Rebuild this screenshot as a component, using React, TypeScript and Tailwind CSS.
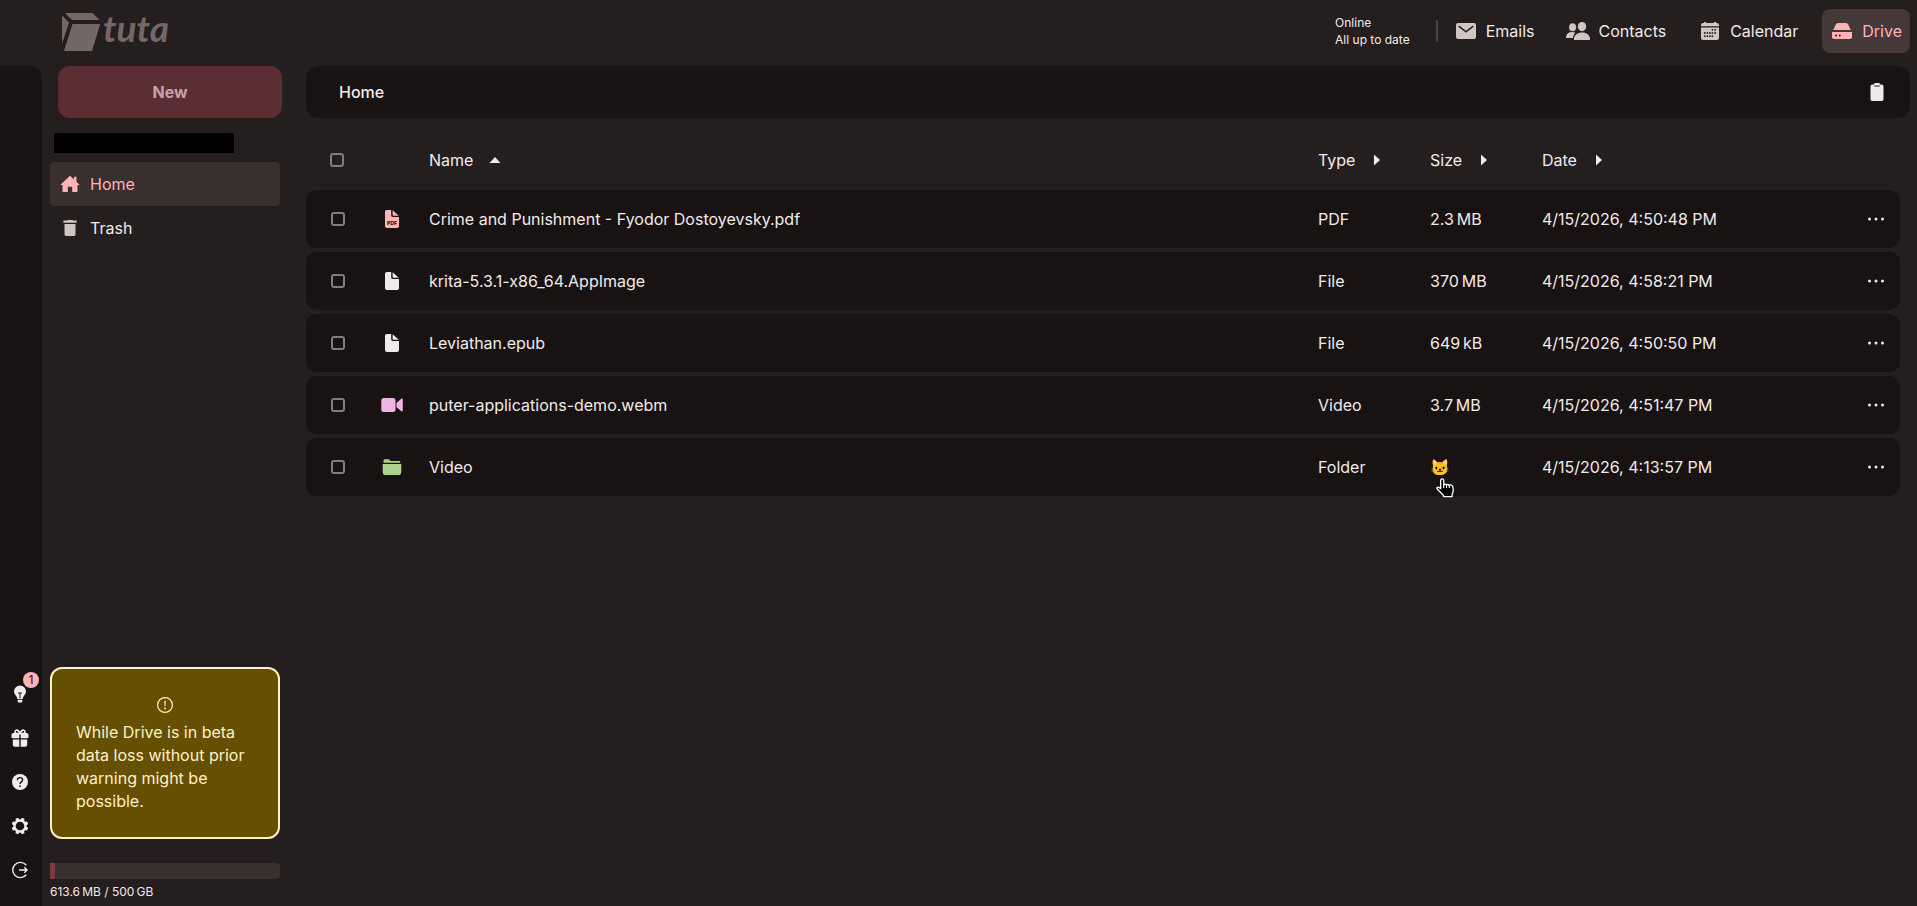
import type { ReactNode } from 'react';

type IconProps = { className?: string };

function Svg({ children, className = 'size-6' }: { children: ReactNode; className?: string }) {
  return (
    <svg viewBox="0 0 24 24" fill="currentColor" className={`shrink-0 ${className}`} aria-hidden="true">
      {children}
    </svg>
  );
}

const MailIcon = () => (
  <Svg>
    <rect x="2" y="4" width="20" height="16" rx="2" />
    <path d="M4.8 7.2 12 12.8l7.2-5.6" fill="none" stroke="#251e1e" strokeWidth="1.5" />
  </Svg>
);

const ContactsIcon = () => (
  <Svg>
    <ellipse cx="6.6" cy="8.3" rx="3.5" ry="4" />
    <ellipse cx="16" cy="7.6" rx="4.2" ry="4.6" />
    <path d="M0 19c0-4 2.600-6 6-6 1.300 0 2.500.2 3.400.8C7.900 15.200 7.200 17 7 19Z" />
    <path d="M8 21v-1.200c0-3.800 3.500-6.300 8-6.300s8 2.500 8 6.300V21Z" />
  </Svg>
);

const calendarDots: [number, number][] = [
  [14.4, 10.8], [17.2, 10.8],
  [6.8, 14], [9.4, 14], [12, 14], [14.4, 14], [17.2, 14],
  [6.8, 17.2], [9.4, 17.2], [12, 17.2], [14.4, 17.2],
];

const CalendarIcon = () => (
  <Svg>
    <path d="M3 7.300V6c0-1.100.9-2 2-2h1V3h2v1h8V3h2v1h1c1.100 0 2 .9 2 2v1.300Z" />
    <path d="M3 8.500h18V19c0 1.100-.9 2-2 2H5c-1.100 0-2-.9-2-2Z" />
    <g fill="#251e1e">
      {calendarDots.map(([x, y]) => (
        <circle key={`${x}-${y}`} cx={x} cy={y} r="0.9" />
      ))}
    </g>
  </Svg>
);

const DriveIcon = () => (
  <Svg>
    <path d="M3.300 11 5.400 6.200C6 4.800 6.900 4 8.400 4h7.200c1.500 0 2.400.8 3 2.200L20.700 11Z" />
    <path d="M2 13h20v5c0 1.300-.7 2-2 2H4c-1.300 0-2-.7-2-2Z" />
    <circle cx="6" cy="16.400" r="1" fill="#251e1e" />
    <circle cx="9.800" cy="16.400" r="1" fill="#251e1e" />
  </Svg>
);

const HomeIcon = () => (
  <Svg>
    <path d="m12 3.700 4 3.700V4.800h2.500v4.900l2.600 2.500c.4.400.2.900-.3.900h-1.300V19c0 .7-.4 1-1 1h-4.300v-5.300H9.800V20H5.500c-.6 0-1-.3-1-1v-5.900H3.200c-.5 0-.7-.5-.3-.9Z" />
  </Svg>
);

const TrashIcon = () => (
  <Svg>
    <path d="M9.300 4.600V4h5.400v.6h3.900v2.100H5.400V4.600Z" />
    <path d="M6.500 8h11v10.300c0 1.100-.6 1.700-1.700 1.700H8.200c-1.100 0-1.700-.6-1.700-1.700Z" />
  </Svg>
);

const ClipboardIcon = () => (
  <Svg>
    <path d="M7.500 4.500h1.300C9.200 3.400 10 3 11 3h2c1 0 1.800.4 2.200 1.500h1.300c1.300 0 2 .7 2 2V19c0 1.300-.7 2-2 2h-9c-1.300 0-2-.7-2-2V6.500c0-1.300.7-2 2-2Z" />
    <rect x="9" y="5" width="6" height="2" rx="1" fill="#8b8484" />
  </Svg>
);

const BulbIcon = () => (
  <Svg>
    <path d="M12 3.500a6 6 0 0 0-6 5.800c0 2.500 1.600 3.800 2.600 5.500.5.900.5 1.500.8 2.200h5.200c.3-.7.3-1.300.8-2.200 1-1.700 2.600-3 2.600-5.500a6 6 0 0 0-6-5.800Z" />
    <path d="M10 11h4M12 11v5.500" fill="none" stroke="#181212" strokeWidth="1" />
    <path d="M9.700 17.800h4.600v1.600c0 .7-.4 1.100-1 1.100h-2.600c-.6 0-1-.4-1-1.100Z" />
  </Svg>
);

const GiftIcon = () => (
  <Svg>
    <path
      d="M12 7.600C10.800 4.500 9.300 3.900 8.200 4.200 6.300 4.700 6.800 7.500 8.500 7.600Zm0 0c1.200-3.100 2.700-3.700 3.800-3.400 1.900.5 1.400 3.300-.3 3.400Z"
      fill="none"
      stroke="currentColor"
      strokeWidth="1.700"
    />
    <path d="M5.500 7h5.800v5.200H4.600c-.7 0-1.100-.4-1.100-1.100V9c0-1.300.7-2 2-2Zm7.200 0h5.800c1.300 0 2 .7 2 2v2.100c0 .7-.4 1.100-1.100 1.100h-6.700Z" />
    <path d="M4.800 13.500h6.500v7.300H6.900c-1.300 0-2.100-.7-2.100-2Zm7.900 0h6.500v5.300c0 1.300-.8 2-2.100 2h-4.400Z" />
  </Svg>
);

const HelpIcon = () => (
  <Svg>
    <circle cx="12" cy="12" r="8" />
    <path d="M9.400 10.200c0-1.600 1-2.600 2.600-2.600s2.600 1 2.600 2.300c0 2-2.500 2-2.500 4" fill="none" stroke="#181212" strokeWidth="1.400" />
    <circle cx="12.100" cy="16.100" r="0.900" fill="#181212" />
  </Svg>
);

const GearIcon = () => (
  <Svg>
    <circle cx="12" cy="12" r="5.500" fill="none" stroke="currentColor" strokeWidth="2.400" />
    {[22.5, 67.5, 112.5, 157.5, 202.5, 247.5, 292.5, 337.5].map((a) => (
      <path key={a} d="M10 6.500 10.600 3.700h2.800l.6 2.800Z" transform={`rotate(${a} 12 12)`} />
    ))}
  </Svg>
);

const LogoutIcon = () => (
  <Svg>
    <path
      d="M18.300 7.300A7.600 7.600 0 1 0 18.300 16.700M11 12h8M16.300 9.300 19 12l-2.700 2.700"
      fill="none"
      stroke="currentColor"
      strokeWidth="1.400"
    />
  </Svg>
);

const WarningIcon = () => (
  <Svg>
    <circle cx="12" cy="12" r="7.400" fill="none" stroke="currentColor" strokeWidth="1.200" />
    <path d="M11.300 7.800h1.400l-.2 5.400h-1Z" />
    <circle cx="12" cy="15.400" r="0.900" />
  </Svg>
);

const FileShape = () => (
  <>
    <path d="M7 3h4.200v5.300c0 1.100.6 1.700 1.700 1.700H19v9c0 1.300-.7 2-2 2H7c-1.300 0-2-.7-2-2V5c0-1.300.7-2 2-2Z" />
    <path d="M12.600 3.200 18.800 8.800h-5.400c-.5 0-.8-.3-.8-.8Z" />
  </>
);

const FileIcon = () => (
  <Svg className="size-6 text-[#f1eaea]">
    <FileShape />
  </Svg>
);

const PdfIcon = () => (
  <Svg className="size-6 text-[#ffb3b5]">
    <FileShape />
    <text x="12" y="17.700" fontSize="5.200" fontWeight="800" textAnchor="middle" fill="#181212" fontFamily="Inter, sans-serif">
      PDF
    </text>
  </Svg>
);

const VideoIcon = () => (
  <Svg className="size-6 text-[#f0b3e6]">
    <rect x="1.300" y="5" width="14.200" height="14" rx="2.500" />
    <path d="M16.400 10 21 6c.8-.7 1.800-.4 1.800.6v10.800c0 1-1 1.300-1.800.6l-4.600-4Z" />
  </Svg>
);

const FolderIcon = () => (
  <Svg className="size-6 text-[#b0d18b]">
    <path d="M3.500 7.800V6c0-1.100.6-1.700 1.700-1.700h3.600L10.500 6h8.300c1 0 1.600.6 1.700 1.800Z" />
    <path d="M2.700 9h18.600v8c-.2 2-.9 3-2.300 3H5c-1.400 0-2.100-1-2.300-3Z" />
  </Svg>
);

function Logo({ className = '' }: IconProps) {
  return (
    <svg viewBox="0 -8 116 56" className={`h-14 w-[116px] ${className}`} fill="#756767" role="img" aria-label="tuta">
      <path d="M0 4.500 7 11.500.3 32H0Z" />
      <path d="M3 2h27.500L37.500 9H10Z" />
      <path d="M10.500 13H38.200L30 40H2Z" />
      <text x="41" y="31" fontFamily="Lato, sans-serif" fontStyle="italic" fontWeight="700" fontSize="37">
        tuta
      </text>
    </svg>
  );
}

const PointerHand = () => (
  <svg viewBox="0 0 19 20" className="pointer-events-none absolute top-10 left-1.5 z-10 h-5 w-[19px]" aria-hidden="true">
    <path
      d="M4.700 2.300c0-2 3-2 3 0v5c0-1.500 2.800-1.400 2.800.1 0-1.300 2.700-1.200 2.700.3 0-1.200 3-1.100 3.600 1 .7 2.600.5 4.200.2 5.300-.2.800-.9 1.600-.9 2.600v2H7.500v-1.300C5.200 15.200 2.700 12.500 1.300 11c-1-1.200.3-2.300 1.500-1.700l1.900 1.300Z"
      fill="#000"
      stroke="#fff"
      strokeWidth="1.300"
      strokeLinejoin="round"
    />
    <path d="M7.700 7v3M10.500 7.500V10M13.300 8v2" stroke="#fff" strokeWidth="1.100" />
  </svg>
);

const apps = [
  { label: 'Emails', icon: <MailIcon />, active: false },
  { label: 'Contacts', icon: <ContactsIcon />, active: false },
  { label: 'Calendar', icon: <CalendarIcon />, active: false },
  { label: 'Drive', icon: <DriveIcon />, active: true },
];

const tools = [
  { label: 'News', icon: <BulbIcon />, badge: 1 },
  { label: 'Gift', icon: <GiftIcon /> },
  { label: 'Help', icon: <HelpIcon /> },
  { label: 'Settings', icon: <GearIcon /> },
  { label: 'Log out', icon: <LogoutIcon /> },
];

const files = [
  { name: 'Crime and Punishment - Fyodor Dostoyevsky.pdf', type: 'PDF', size: '2.3\u202fMB', date: '4/15/2026, 4:50:48 PM', icon: <PdfIcon /> },
  { name: 'krita-5.3.1-x86_64.AppImage', type: 'File', size: '370\u202fMB', date: '4/15/2026, 4:58:21 PM', icon: <FileIcon /> },
  { name: 'Leviathan.epub', type: 'File', size: '649\u202fkB', date: '4/15/2026, 4:50:50 PM', icon: <FileIcon /> },
  { name: 'puter-applications-demo.webm', type: 'Video', size: '3.7\u202fMB', date: '4/15/2026, 4:51:47 PM', icon: <VideoIcon /> },
  { name: 'Video', type: 'Folder', size: '🐱', date: '4/15/2026, 4:13:57 PM', icon: <FolderIcon />, hovered: true },
];

function Checkbox({ label }: { label: string }) {
  return (
    <input
      type="checkbox"
      aria-label={label}
      className="block size-3.5 appearance-none rounded-[3px] border-2 border-[#847c7c] checked:bg-[#ffb3b5]"
    />
  );
}

function SortHeader({ label, sorted = false }: { label: string; sorted?: boolean }) {
  return (
    <button type="button" className="flex items-center gap-4">
      {label}
      <svg viewBox="0 0 12 12" className="size-3" fill="#f1eaea" aria-hidden="true">
        {sorted ? <path d="M.5 9 6 3l5.500 6Z" /> : <path d="M3 .5 9 6l-6 5.500Z" />}
      </svg>
    </button>
  );
}

function FileTable() {
  return (
    <table className="w-full table-fixed border-separate border-spacing-x-0 border-spacing-y-1 text-left">
      <colgroup>
        <col className="w-[58px]" />
        <col className="w-[65px]" />
        <col />
        <col className="w-28" />
        <col className="w-28" />
        <col className="w-[310px]" />
        <col className="w-12" />
      </colgroup>
      <thead>
        <tr className="h-[52px]">
          <th className="pl-6"><Checkbox label="Select all" /></th>
          <td />
          <th className="font-normal" aria-sort="ascending"><SortHeader label="Name" sorted /></th>
          <th className="font-normal"><SortHeader label="Type" /></th>
          <th className="font-normal"><SortHeader label="Size" /></th>
          <th className="font-normal"><SortHeader label="Date" /></th>
          <td />
        </tr>
      </thead>
      <tbody>
        {files.map((file) => (
          <tr key={file.name} className="h-[58px] *:bg-[#181212]">
            <td className="rounded-l-[10px] pl-[25px]"><Checkbox label={`Select ${file.name}`} /></td>
            <td className="pl-4">{file.icon}</td>
            <td className="truncate">{file.name}</td>
            <td>{file.type}</td>
            <td className="relative">
              {file.size}
              {file.hovered && <PointerHand />}
            </td>
            <td>{file.date}</td>
            <td className="rounded-r-[10px]">
              <button type="button" aria-label={`Actions for ${file.name}`} className="mx-auto block">
                <Svg>
                  <circle cx="5.500" cy="12" r="1.500" />
                  <circle cx="12" cy="12" r="1.500" />
                  <circle cx="18.500" cy="12" r="1.500" />
                </Svg>
              </button>
            </td>
          </tr>
        ))}
      </tbody>
    </table>
  );
}

function Header() {
  return (
    <header className="flex h-[66px] items-center justify-between pr-[7px] pl-[62px]">
      <Logo className="-mt-1" />
      <div className="flex h-full items-center pb-1">
        <div className="mr-[26px] text-xs leading-[17px]">
          <p>Online</p>
          <p>All up to date</p>
        </div>
        <div className="mr-2 h-[22px] w-0.5 bg-[#4b4242]" />
        <nav className="flex gap-4">
          {apps.map((app) => (
            <a
              key={app.label}
              href="#"
              className={
                app.active
                  ? 'flex h-11 items-center gap-2 rounded-lg bg-[#443838] px-2 text-[#ffb3b5]'
                  : 'flex h-11 items-center gap-2 rounded-lg px-2'
              }
            >
              <span className={app.active ? '' : 'text-[#d0c4c4]'}>{app.icon}</span>
              {app.label}
            </a>
          ))}
        </nav>
      </div>
    </header>
  );
}

function ToolRail() {
  return (
    <aside className="flex w-[42px] shrink-0 flex-col justify-end rounded-tr-xl bg-[#181212] pr-0.5 pb-3.5">
      {tools.map((tool) => (
        <button key={tool.label} type="button" aria-label={tool.label} className="relative flex h-11 items-center justify-center">
          {tool.icon}
          {tool.badge && (
            <span className="absolute top-0 right-px flex size-4 items-center justify-center rounded-full bg-[#ffb3b5] text-xs leading-none font-medium text-[#5f1a22]">
              {tool.badge}
            </span>
          )}
        </button>
      ))}
    </aside>
  );
}

function Sidebar() {
  return (
    <aside className="flex w-[264px] shrink-0 flex-col pr-[26px] pl-2">
      <button type="button" className="-mr-0.5 ml-2 h-[52px] shrink-0 rounded-xl bg-[#5c2d31] font-bold text-[#c3a4a5]">
        New
      </button>
      <div className="mt-[15px] ml-1 h-5 w-[180px] shrink-0 bg-black" />
      <nav className="mt-[9px]">
        <a href="#" className="flex h-11 items-center gap-2 rounded bg-[#3a2f2f] pl-2 text-[#ffb3b5]">
          <HomeIcon />
          Home
        </a>
        <a href="#" className="flex h-11 items-center gap-2 rounded pl-2">
          <span className="text-[#d0c4c4]"><TrashIcon /></span>
          Trash
        </a>
      </nav>
      <section className="mt-auto rounded-xl border-2 border-[#ffefc9] bg-[#645000] px-6 pt-6 pb-6 text-[#ffefc9]">
        <div className="mb-1 flex justify-center"><WarningIcon /></div>
        <p className="leading-[23px]">While Drive is in beta data loss without prior warning might be possible.</p>
      </section>
      <div className="mt-6 h-4 shrink-0 overflow-hidden rounded-r bg-[#3a2f2f]">
        <div className="h-full w-[5px] bg-[#7d393d]" />
      </div>
      <p className="mt-1 mb-1.5 text-xs leading-[17px]">{'613.6\u202fMB / 500\u202fGB'}</p>
    </aside>
  );
}

export default function App() {
  return (
    <div className="flex min-h-screen flex-col bg-[#251e1e] font-['Inter',sans-serif] text-base text-[#f1eaea]">
      <Header />
      <div className="flex grow">
        <ToolRail />
        <Sidebar />
        <main className="min-w-0 grow pr-[7px]">
          <div className="flex h-[52px] items-center justify-between rounded-xl bg-[#181212] pr-[21px] pl-[33px]">
            <h1 className="font-medium">Home</h1>
            <button type="button" aria-label="Paste"><ClipboardIcon /></button>
          </div>
          <div className="mt-3 pr-2.5">
            <FileTable />
          </div>
        </main>
      </div>
    </div>
  );
}
